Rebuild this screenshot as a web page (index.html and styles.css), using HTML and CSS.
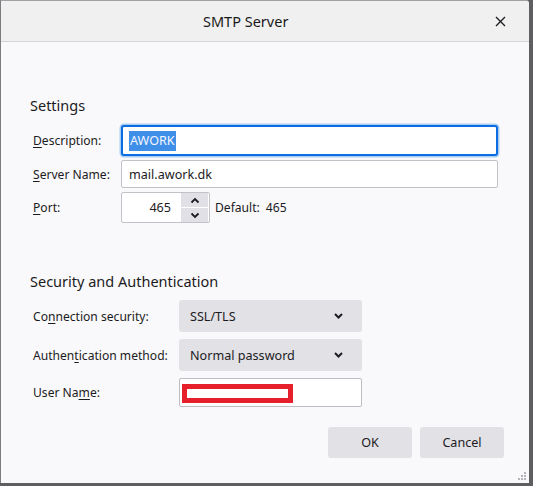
FILE: index.html
```html
<!DOCTYPE html>
<html>
<head>
<meta charset="utf-8">
<title>SMTP Server</title>
<link rel="stylesheet" href="styles.css">
</head>
<body>
<div class="dialog">
  <header class="titlebar">
    <span class="title">SMTP Server</span>
    <svg class="close" width="11" height="11" viewBox="0 0 11 11"><path d="M1 1 L10 10 M10 1 L1 10" stroke="#1e1e22" stroke-width="1.4" fill="none"/></svg>
  </header>
  <main class="content">
    <h2 class="heading">Settings</h2>
    <div class="grid settings-grid">
      <label class="label"><u>D</u>escription:</label>
      <div class="field focused"><span class="selected">AWORK</span></div>
      <label class="label"><u>S</u>erver Name:</label>
      <div class="field">mail.awork.dk</div>
      <label class="label"><u>P</u>ort:</label>
      <div class="port-row">
        <div class="field port">
          <span class="port-value">465</span>
          <span class="spinner">
            <span class="spin-btn"><svg width="10" height="7" viewBox="0 0 10 7"><path d="M1.5 5.5 L5 2 L8.5 5.5" fill="none" stroke="#1c1b22" stroke-width="1.8"/></svg></span>
            <span class="spin-btn"><svg width="10" height="7" viewBox="0 0 10 7"><path d="M1.5 1.5 L5 5 L8.5 1.5" fill="none" stroke="#1c1b22" stroke-width="1.8"/></svg></span>
          </span>
        </div>
        <span class="default">Default:<span class="default-val">465</span></span>
      </div>
    </div>

    <h2 class="heading security-heading">Security and Authentication</h2>
    <div class="grid security-grid">
      <label class="label">Co<u>n</u>nection security:</label>
      <div class="select"><span>SSL/TLS</span><svg class="chev" width="9" height="6" viewBox="0 0 9 6"><path d="M1 1 L4.5 4.5 L8 1" fill="none" stroke="#1c1b22" stroke-width="2"/></svg></div>
      <label class="label">Authen<u>t</u>ication method:</label>
      <div class="select"><span>Normal password</span><svg class="chev" width="9" height="6" viewBox="0 0 9 6"><path d="M1 1 L4.5 4.5 L8 1" fill="none" stroke="#1c1b22" stroke-width="2"/></svg></div>
      <label class="label">User Na<u>m</u>e:</label>
      <div class="field user"><span class="redact"></span></div>
    </div>

    <footer class="buttons">
      <button class="btn">OK</button>
      <button class="btn">Cancel</button>
    </footer>
  </main>
  <svg class="grip" width="9" height="9" viewBox="0 0 9 9">
    <rect x="6" y="0" width="2" height="2" fill="#b4b4b8"/>
    <rect x="3" y="3" width="2" height="2" fill="#b4b4b8"/>
    <rect x="6" y="3" width="2" height="2" fill="#b4b4b8"/>
    <rect x="0" y="6" width="2" height="2" fill="#b4b4b8"/>
    <rect x="3" y="6" width="2" height="2" fill="#b4b4b8"/>
    <rect x="6" y="6" width="2" height="2" fill="#b4b4b8"/>
  </svg>
</div>
</body>
</html>
```
FILE: styles.css
```css
html, body {
  margin: 0;
  padding: 0;
}
body {
  background: #5e5e60;
  width: 533px;
  height: 486px;
  overflow: hidden;
  font-family: "Noto Sans", "Open Sans", sans-serif;
  font-size: 12.1px;
  color: #1c1b22;
}
.dialog {
  position: relative;
  box-sizing: border-box;
  width: 529px;
  height: 483px;
  background: #f9f9fb;
  border-left: 1px solid #7c7c80;
  border-top: 1px solid #a0a0a4;
  border-top-right-radius: 3px;
  display: flex;
  flex-direction: column;
}
.titlebar {
  height: 40px;
  background: #f0f0f0;
  border-bottom: 1px solid #d4d4d6;
  display: flex;
  align-items: center;
  border-top-right-radius: 3px;
}
.title {
  margin-left: 202px;
  font-size: 14.5px;
  color: #1a1a1a;
}
.close {
  margin-left: auto;
  margin-right: 23px;
}
.content {
  padding: 53px 25px 0 32px;
  display: flex;
  flex-direction: column;
}
.heading {
  margin: 0 0 0 -3px;
  font-size: 14.5px;
  font-weight: normal;
  line-height: 20px;
  height: 20px;
}
.grid {
  display: grid;
  align-items: center;
}
.settings-grid {
  margin-top: 10px;
  grid-template-columns: 88px 377px;
  grid-template-rows: 31px 28px 31px;
  row-gap: 4px;
}
.label u {
  text-decoration-thickness: 1px;
  text-underline-offset: 2px;
}
.field {
  box-sizing: border-box;
  height: 100%;
  background: #fff;
  border: 1px solid #c2c2c8;
  border-radius: 2px;
  display: flex;
  align-items: center;
  padding-left: 7px;
  font-size: 12.6px;
}
.focused {
  border: 2px solid #0b6ee0;
  box-shadow: 0 0 0 1.5px #a9cdf4;
  padding-left: 6px;
  border-radius: 3px;
}
.selected {
  background: #3f8fe8;
  color: #f4f6ff;
  padding: 1px 1px;
  line-height: 18px;
}
.port-row {
  display: flex;
  align-items: center;
  height: 100%;
}
.field.port {
  width: 89px;
  padding: 0;
  justify-content: flex-end;
}
.port-value {
  margin-right: 10px;
}
.spinner {
  display: flex;
  flex-direction: column;
  width: 27px;
  height: 29px;
  gap: 1px;
  margin-right: 1px;
}
.spin-btn {
  flex: 1;
  background: #e0e0e6;
  display: flex;
  align-items: center;
  justify-content: center;
}
.default {
  margin-left: 5px;
}
.default-val {
  margin-left: 6px;
}
.security-heading {
  margin-top: 48px;
}
.security-grid {
  margin-top: 9px;
  grid-template-columns: 146px 183px;
  grid-template-rows: 32px 32px 29px;
  row-gap: 7px;
}
.select {
  box-sizing: border-box;
  height: 100%;
  background: #e1e1e6;
  border-radius: 3px;
  display: flex;
  align-items: center;
  padding: 0 19px 0 11px;
  font-size: 12.6px;
}
.chev {
  margin-left: auto;
}
.field.user {
  padding-left: 2px;
  padding-top: 5px;
  align-items: flex-start;
  border-color: #bdbdc4;
}
.redact {
  box-sizing: border-box;
  width: 111px;
  height: 19px;
  border: 5px solid #e5202b;
  background: #fff;
}
.buttons {
  margin-top: 20px;
  display: flex;
  justify-content: flex-end;
  gap: 8px;
}
.btn {
  width: 84px;
  height: 31px;
  border: none;
  border-radius: 3px;
  background: #e1e1e6;
  font-family: "Noto Sans", "Open Sans", sans-serif;
  font-size: 12.6px;
  color: #1c1b22;
  padding: 0;
}
.grip {
  position: absolute;
  right: 2px;
  bottom: 2px;
}
```
